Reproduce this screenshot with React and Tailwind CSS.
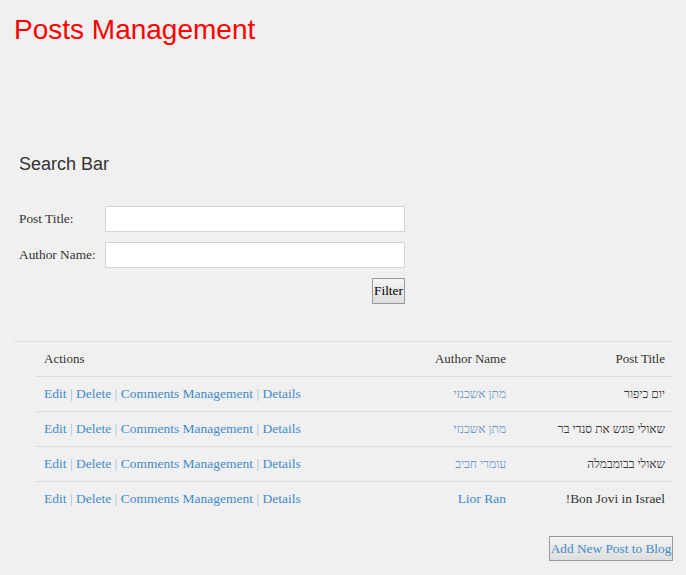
import React from "react";

const posts = [
  { title: "יום כיפור", author: "מתן אשכנזי", heb: true, authorHeb: true },
  { title: "שאולי פוגש את סנדי בר", author: "מתן אשכנזי", heb: true, authorHeb: true },
  { title: "שאולי בבומבמלה", author: "עומרי חביב", heb: true, authorHeb: true },
  { title: "Bon Jovi in Israel!", author: "Lior Ran", heb: false, authorHeb: false },
];

const serif = "font-['Liberation_Serif','Times_New_Roman',serif]";
const sans = "font-['Liberation_Sans',Arial,sans-serif]";
const hebrew = "text-[12px]";

export default function App() {
  return (
    <div className={`min-h-[575px] w-[686px] bg-[#f0f0f0] ${serif} text-[13px] text-[#333]`}>
      <h1 className={`${sans} px-[14px] pt-[14px] text-[28px] leading-[32px] text-[#ff0000]`}>
        Posts Management
      </h1>

      <h2 className={`${sans} mt-[108px] px-[19px] text-[18px] leading-[21px] text-[#333]`}>
        Search Bar
      </h2>

      <div className="mt-[31px] w-[405px] pl-[19px] text-[13.33px]">
        <div className="flex h-[26px] items-center">
          <label className="w-[86px]">Post Title:</label>
          <input className="h-[26px] w-[300px] border border-[#d4d4d4] bg-white outline-none" />
        </div>
        <div className="mt-[10px] flex h-[26px] items-center">
          <label className="w-[86px]">Author Name:</label>
          <input className="h-[26px] w-[300px] border border-[#d4d4d4] bg-white outline-none" />
        </div>
        <div className="mt-[10px] flex justify-end">
          <button className="h-[26px] w-[33px] border border-[#9a9a9a] bg-gradient-to-b from-[#f4f4f4] to-[#dedede] text-[13.33px] text-black">
            Filter
          </button>
        </div>
      </div>

      <div className="ml-[14px] mt-[37px] w-[659px] border-t border-[#dcdcdc]">
        <div className="ml-[22px]">
          <div className="flex h-[34px] items-center">
            <div className="flex-1 px-2">Actions</div>
            <div className="w-[200px] px-2 text-right">Author Name</div>
            <div className="w-[159px] px-2 text-right">Post Title</div>
          </div>
          {posts.map((p, i) => (
            <div key={i} className="flex h-[35px] items-center border-t border-[#dcdcdc]">
              <div className="flex-1 px-2 text-[13.5px] text-[#428bca]">
                <a>Edit</a> <span className="text-[#9bb8d6]">|</span> <a>Delete</a>{" "}
                <span className="text-[#9bb8d6]">|</span> <a>Comments Management</a>{" "}
                <span className="text-[#9bb8d6]">|</span> <a>Details</a>
              </div>
              <div
                className={`w-[200px] px-2 text-right ${
                  p.authorHeb ? "text-[12px] text-[#6f95c4]" : "text-[13.5px] text-[#428bca]"
                }`}
              >
                {p.author}
              </div>
              <div
                dir="rtl"
                className={`w-[159px] px-2 text-right ${p.heb ? hebrew : "text-[13.4px]"}`}
              >
                {p.title}
              </div>
            </div>
          ))}
        </div>
      </div>

      <div className="mt-[20px] flex w-[673px] justify-end">
        <button className="h-[25px] w-[124px] border border-[#9a9a9a] bg-gradient-to-b from-[#f4f4f4] to-[#dedede] text-[13.33px] text-[#428bca]">
          Add New Post to Blog
        </button>
      </div>
    </div>
  );
}
